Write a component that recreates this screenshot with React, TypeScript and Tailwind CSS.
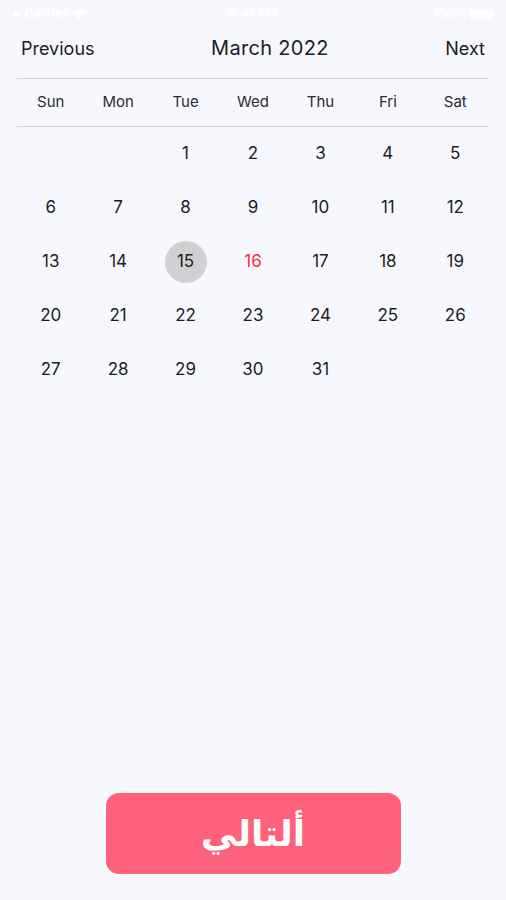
import React from 'react';

const weekDays = ['Sun', 'Mon', 'Tue', 'Wed', 'Thu', 'Fri', 'Sat'];

// March 2022 starts on a Tuesday
const cells: (number | null)[] = [null, null, ...Array.from({ length: 31 }, (_, i) => i + 1)];

const StatusBar = () => (
  <div className="h-[28px] flex items-center justify-between px-[12px] text-white text-[13px] font-semibold">
    <div className="flex items-center gap-[4px] w-[150px]">
      <span className="text-[9px]">●</span>
      <span>Carrier</span>
      <svg width="14" height="10" viewBox="0 0 14 10" fill="white">
        <path d="M7 10 L0 3 A10 10 0 0 1 14 3 Z" />
      </svg>
    </div>
    <span>9:41 PM</span>
    <div className="flex items-center justify-end gap-[4px] w-[150px]">
      <span className="text-[12px]">100%</span>
      <div className="w-[24px] h-[11px] rounded-[3px] bg-white" />
    </div>
  </div>
);

export default function App() {
  return (
    <div className="w-[506px] h-[900px] bg-[#f7f8fe] flex flex-col" style={{ fontFamily: 'Inter, "Noto Sans", sans-serif' }}>
      <StatusBar />

      <div className="px-[17px]">
        <div className="h-[40px] flex items-center justify-between px-[4px] text-[#1c1c1e]">
          <span className="text-[18px]">Previous</span>
          <span className="text-[20px] tracking-[0.3px]">March 2022</span>
          <span className="text-[18px]">Next</span>
        </div>
        <div className="mt-[10px] h-[1px] bg-[#d3d4d8]" />
        <div className="grid grid-cols-7 h-[47px] items-center text-[15px] text-[#2b2b2f]">
          {weekDays.map((d) => (
            <div key={d} className="text-center">{d}</div>
          ))}
        </div>
        <div className="h-[1px] bg-[#d3d4d8]" />
        <div className="grid grid-cols-7">
          {cells.map((d, i) => (
            <div key={i} className="h-[54px] flex items-center justify-center">
              {d !== null && (
                <div
                  className={`w-[42px] h-[42px] rounded-full flex items-center justify-center text-[17px] ${
                    d === 15 ? 'bg-[#d1d1d3] text-[#1c1c1e]' : d === 16 ? 'text-[#f0303f]' : 'text-[#1c1c1e]'
                  }`}
                >
                  {d}
                </div>
              )}
            </div>
          ))}
        </div>
      </div>

      <div className="flex-1" />

      <div className="flex justify-center pb-[26px]">
        <button
          className="w-[295px] h-[81px] rounded-[13px] bg-[#fe6179] text-white text-[36px] font-bold flex items-center justify-center"
          style={{ fontFamily: '"DejaVu Sans", sans-serif' }}
          dir="rtl"
        >
          ألتالي
        </button>
      </div>
    </div>
  );
}
